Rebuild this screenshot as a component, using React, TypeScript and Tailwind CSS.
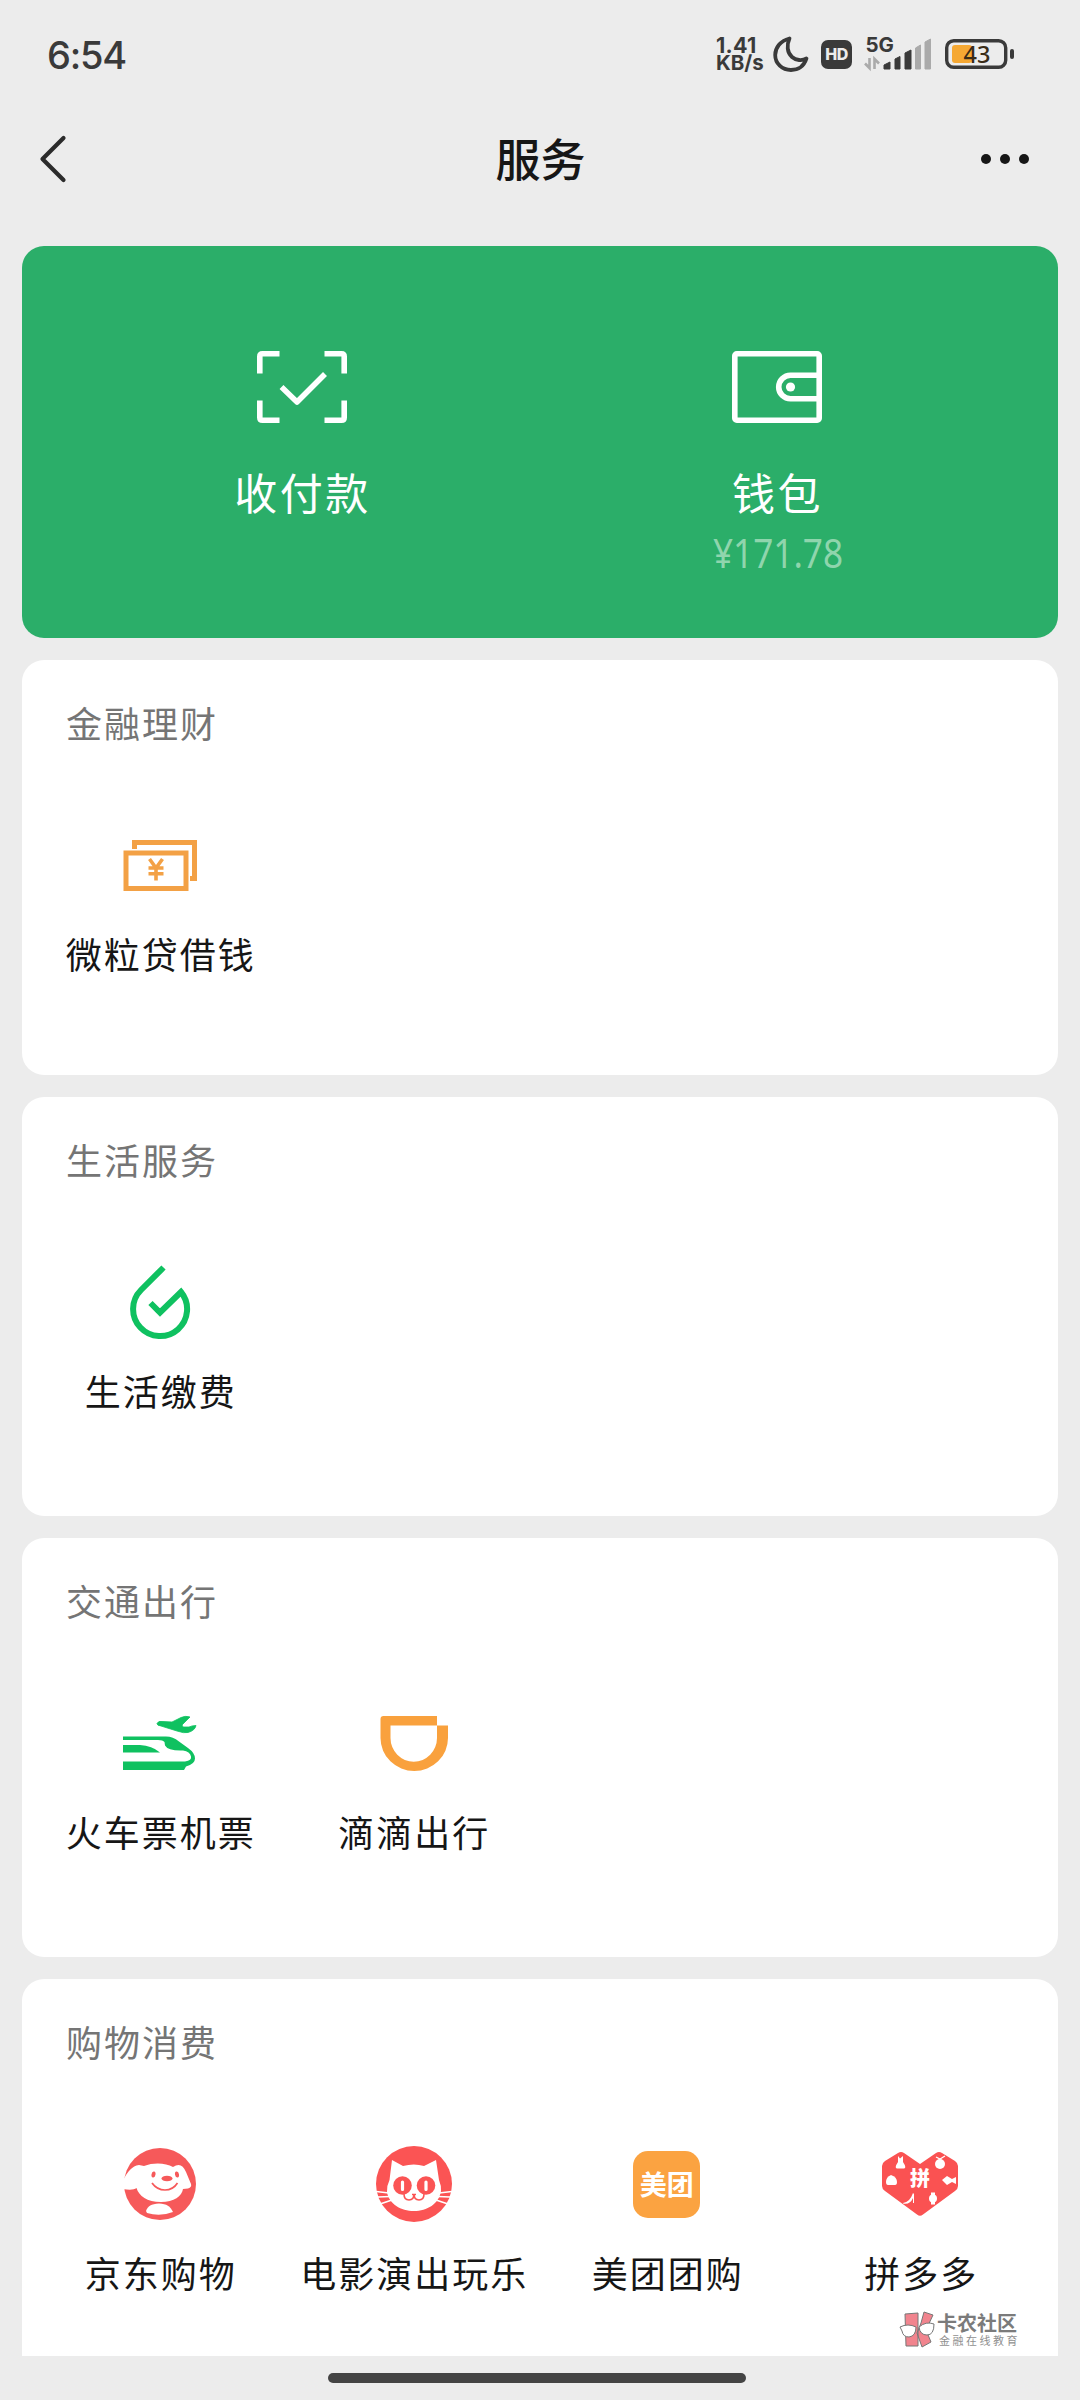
import React from "react";

const Battery = () => (
  <svg width="70" height="30" viewBox="0 0 70 30">
    <rect x="1.7" y="1.7" width="59" height="26.6" rx="7" fill="none" stroke="#3a3a3a" strokeWidth="3.4" />
    <rect x="7" y="6" width="20" height="18" rx="3" fill="#f5a833" />
    <rect x="65" y="10" width="4" height="10" rx="2" fill="#3a3a3a" />
    <text x="32" y="23.5" textAnchor="middle" fontSize="23.5" fontFamily="'Noto Sans', sans-serif" fontWeight="500" fill="#3a2c18">43</text>
  </svg>
);

const StatusBar = () => (
  <header className="flex h-[108px] items-center pl-[47px] pr-[65px] text-[#3a3a3a]">
    <span className="mt-[2px] font-[Inter] text-[38px] font-medium leading-none tracking-[-1.2px]">6:54</span>
    <div className="ml-auto flex items-center">
      <div className="mr-[9px] w-[48px] whitespace-nowrap font-[Inter] font-bold">
        <div className="text-[21.5px] leading-[18px] tracking-[0.3px]">1.41</div>
        <div className="text-[20.5px] leading-[18px]">KB/s</div>
      </div>
      <svg width="36" height="36" viewBox="0 0 36 36" className="mr-[12px]">
        <path d="M16.5 2.500 C7 5 2.200 12 2.200 19 C2.200 27.500 9 34 18 34 C25.500 34 31 30 33.500 22.500 C29 25 23 24.500 19 21 C14 16.500 13.500 9 16.500 2.500Z" fill="none" stroke="#3a3a3a" strokeWidth="3.8" strokeLinejoin="round" />
      </svg>
      <div className="mr-[12px] flex h-[29px] w-[31px] items-center justify-center rounded-[7px] bg-[#3a3a3a] font-[Inter] text-[16px] font-extrabold leading-none tracking-[-0.5px] text-[#ececec]">HD</div>
      <svg width="68" height="36" viewBox="0 0 68 36" className="mr-[13px] overflow-visible">
        <text x="1.5" y="15.5" fontSize="20.500" fontWeight="700" fontFamily="Inter, sans-serif" fill="#3a3a3a">5G</text>
        <g stroke="#aaa" strokeWidth="2.600" fill="none">
          <path d="M1 27.500 L5.500 32 V22" />
          <path d="M10.500 33 V23 L15 27.500" />
        </g>
        <path d="M20 33 V29 L26 26 V33Z M31 33 V23 L36 20.500 V33Z M41 33 V17 L47 14 V33Z" fill="#3a3a3a" stroke="#3a3a3a" strokeLinejoin="round" />
        <path d="M51.500 33 V12 L56.500 9 V33Z M61 33 V6 L66.500 3 V33Z" fill="#aaa" stroke="#aaa" strokeLinejoin="round" />
      </svg>
      <Battery />
    </div>
  </header>
);

const NavBar = () => (
  <nav className="flex h-[102px] items-center justify-between pl-[39px] pr-[51px]">
    <svg width="30" height="48" viewBox="0 0 30 48" fill="none" stroke="#2b2b2b" strokeWidth="4.200" strokeLinecap="round" strokeLinejoin="round">
      <path d="M24.500 3 L3.500 24 L24.500 45" />
    </svg>
    <h1 className="-mt-[4px] ml-[31px] text-[45px] font-medium leading-none text-[#161616]">服务</h1>
    <div className="flex gap-[9px]">
      <i className="size-[10px] rounded-full bg-[#161616]" />
      <i className="size-[10px] rounded-full bg-[#161616]" />
      <i className="size-[10px] rounded-full bg-[#161616]" />
    </div>
  </nav>
);

const ScanIcon = () => (
  <svg width="90" height="72" viewBox="0 0 90 72" fill="none" stroke="white" strokeWidth="5.600">
    <path d="M2.800 22.500 V5.500 Q2.800 2.800 5.500 2.800 H22.500 M67.500 2.800 H84.500 Q87.200 2.800 87.200 5.500 V22.500 M87.200 49.500 V66.500 Q87.200 69.200 84.500 69.200 H67.500 M22.500 69.200 H5.500 Q2.800 69.200 2.800 66.500 V49.500" />
    <path d="M24.500 36 L40 51 L68 23" strokeLinejoin="round" />
  </svg>
);

const WalletIcon = () => (
  <svg width="90" height="72" viewBox="0 0 90 72" fill="none" stroke="white" strokeWidth="5.600">
    <rect x="2.800" y="2.800" width="84.400" height="66.400" rx="2" />
    <path d="M86 24.200 H58.500 A11.800 11.800 0 0 0 58.500 47.800 H86" />
    <circle cx="58.500" cy="36" r="4.600" fill="white" stroke="none" />
  </svg>
);

const LoanIcon = () => (
  <svg width="76" height="76" viewBox="0 0 76 76" fill="none" stroke="#f3a145" strokeWidth="5">
    <path d="M12.500 22 V15.500 H72.500 V51.500 H68" />
    <rect x="4" y="26" width="60" height="35.500" />
    <path d="M27.500 32 L34 41 L40.500 32 M26.500 41 H41.500 M26.500 46.800 H41.500 M34 41 V53.500" strokeWidth="3.600" />
  </svg>
);

const DropIcon = () => (
  <svg width="76" height="76" viewBox="0 0 76 76" fill="none" stroke="#0fc160" strokeWidth="6">
    <path d="M41.500 3.500 L19 26 A27 27 0 1 0 59 28 L38 48.500 L28.500 39" />
  </svg>
);

const TravelIcon = () => (
  <svg width="76" height="76" viewBox="0 0 76 76" fill="#0fc160">
    <path d="M35 18.500 Q36 15.500 41 16.500 L50 17 L59 12.500 Q64 10.500 68 12 L60 20 L61 22 L67 22 Q70 20.500 74 20.500 Q73 25.500 66 27.500 Q62 28.500 55 26 L39 21 Q35 20.500 35 18.500Z" stroke="#0fc160" strokeWidth="0.800" strokeLinejoin="round" />
    <path d="M1 31.500 H44 Q51 31.500 57 36.500 L66 43 Q73 48 73 53.500 Q73 59 64 61.500 L62 65 H1 V56.500 H63 Q70 55.500 69 51.500 Q68 46.500 61 45.500 Q46 46 43 40.500 L42.500 37 Q41 35 36 35 H1Z" />
    <path d="M1 40 H18 Q30 40.500 38 47.500 H1Z" />
  </svg>
);

const DidiIcon = () => (
  <svg width="76" height="76" viewBox="0 0 76 76" fill="#f9a13d" fillRule="evenodd" className="ml-[2px]">
    <path d="M7.500 11 H61 V20.500 H72 V33 A33.750 33 0 0 1 4.500 33 V14 Q4.500 11 7.500 11Z M14.500 20.500 V33 A23.250 23.700 0 0 0 61 33 V20.500Z" />
  </svg>
);

const JdIcon = () => (
  <svg width="76" height="76" viewBox="0 0 76 76">
    <circle cx="38" cy="38" r="36" fill="#f6595a" />
    <path d="M0 36 C6 25 10 20 17 19 L22 20 C32 16 44 17 51 21 C57 17 61 19 64 26 L69 38 Q70 41 66 42.500 L61 43 C60 50 52 56 39 56 C25 56 17 50 14.500 42 C12 44 7 44 1 43Z" fill="white" />
    <path d="M24 65 C26 60 29 58 37 57.500 C45 58 48 60 51 66 Q38 71 25 67Z" fill="white" />
    <ellipse cx="31.500" cy="28.500" rx="2" ry="3" fill="#f6595a" transform="rotate(10 31.500 28.500)" />
    <ellipse cx="55" cy="28.500" rx="2" ry="3" fill="#f6595a" transform="rotate(-10 55 28.500)" />
    <ellipse cx="45" cy="32.500" rx="5.500" ry="2.800" fill="#f6595a" />
    <path d="M30 37 Q35 44 43 44 Q51 44 55.500 37" fill="none" stroke="#f6595a" strokeWidth="1.700" />
  </svg>
);

const CatIcon = () => (
  <svg width="76" height="76" viewBox="0 0 76 76" className="ml-px">
    <circle cx="38" cy="38" r="38" fill="#fb5454" />
    <path d="M13.500 34 L16 14 L27 20 Q38 17 48 20 L60 14 L63 34 Q65.500 40 65 45 C63 58 51 65 38 65 C25 65 13 58 11 46 Q10.500 40 13.500 34Z" fill="white" />
    <circle cx="26.500" cy="39.500" r="9.300" fill="#fb5454" />
    <circle cx="50" cy="39.500" r="9.300" fill="#fb5454" />
    <path d="M26.500 36 V43.500 M50 36 V43.500" stroke="white" strokeWidth="3.200" strokeLinecap="round" />
    <path d="M28 48 Q28 54 33 54 Q38 54 38 48 Q38 54 43 54 Q48 54 48 48 M36 48.500 H40" stroke="#fb5454" strokeWidth="1.600" fill="none" />
    <path d="M0 45.500 L13 47 M2 51 L14 50.500 M4 58 L16 54 M76 45.500 L63 47 M74 51 L62 50.500 M72 58 L60 54" stroke="white" strokeWidth="1.700" />
  </svg>
);

const MeituanIcon = () => (
  <div className="flex size-[67px] items-center justify-center rounded-[15px] bg-[#fba341] pb-[2px] text-[27px] font-bold leading-none text-white">美团</div>
);

const PddIcon = () => (
  <svg width="78" height="76" viewBox="0 0 78 76">
    <path d="M17 7 Q20 5 23 7 L39 18 L55 7 Q58 5 61 7 L74 15 Q77 17 77 20 V40 Q77 43 74 45 L42 68.500 Q39 71 36 68.500 L4 45 Q1 43 1 40 V20 Q1 17 4 15Z" fill="#fa5252" />
    <text x="39" y="40" textAnchor="middle" fontSize="20" fontWeight="900" fill="white" fontFamily="'Noto Sans CJK SC', sans-serif">拼</text>
    <g fill="white">
      <path d="M17 10 L19 12.500 L22 10 L22 16 Q26 22 23 22.500 H16 Q13 22 17 16Z" />
      <circle cx="59" cy="18" r="5" />
      <path d="M55 11 L59 13 L64 10" stroke="white" strokeWidth="1.300" fill="none" />
      <path d="M5 36 Q5 31 10 29 Q16 31 16 36 Q16 39 14 39 H7 Q5 39 5 36Z" />
      <path d="M61 34 L66 30 L71 33 L75 31 V38 L71 36 L66 39Z" />
      <path d="M22 57 Q29 56 32 47 L33 48 V57 H32 V52 Q29 59 22 57.500Z" />
      <circle cx="52" cy="52.500" r="4" />
      <rect x="50" y="46.500" width="4" height="12" />
    </g>
  </svg>
);

type Item = { label: string; icon: React.ReactNode };

const Section = ({ title, items, className }: { title: string; items: Item[]; className: string }) => (
  <section className={`rounded-[22px] bg-white px-[11px] pt-[40px] ${className}`}>
    <h2 className="pl-[33px] text-[36px] leading-[44px] tracking-[2px] text-[#757575]">{title}</h2>
    <div className="mt-[83px] grid grid-cols-4">
      {items.map((item) => (
        <div key={item.label} className="flex flex-col items-center">
          <div className="flex h-[76px] items-center justify-center">{item.icon}</div>
          <div className="mt-[28px] whitespace-nowrap pl-[2px] text-[36px] leading-[44px] tracking-[2px] text-[#161616]">{item.label}</div>
        </div>
      ))}
    </div>
  </section>
);

const Watermark = () => (
  <div className="absolute left-[899px] top-[2311px] flex items-start">
    <svg width="36" height="37" viewBox="0 0 36 37" stroke="#777" strokeWidth="1">
      <path d="M6 3 L19 2 V35 L7 35Z M22 12 L25 1 L34 4 L27 19 L32 31 L23 36 L18 22Z" fill="#f1848e" />
      <path d="M1 16 Q9 12 17 16 Q17 25 10 26 Q4 26 3 20Z M20 16 Q27 10 35 13 Q35 24 28 24 Q21 24 20 16Z" fill="white" />
    </svg>
    <div className="ml-[2px] whitespace-nowrap text-[#7b7b7b]">
      <div className="text-[20px] font-bold leading-[23px]">卡农社区</div>
      <div className="pl-[2px] text-[11px] leading-[12px] tracking-[2.500px] text-[#909090]">金融在线教育</div>
    </div>
  </div>
);

export default function App() {
  return (
    <div className="relative flex h-[2400px] w-[1080px] flex-col overflow-hidden bg-[#ececec] font-['Noto_Sans_CJK_SC',sans-serif]">
      <StatusBar />
      <NavBar />
      <main className="mt-[36px] flex h-[2110px] flex-col gap-[22px] overflow-hidden px-[22px]">
        <section className="grid h-[392px] shrink-0 grid-cols-2 rounded-[22px] bg-[#2bae69] pl-[42px] pr-[44px] pt-[105px] text-white">
          <div className="flex flex-col items-center">
            <ScanIcon />
            <div className="mt-[42px] pl-[2px] text-[43px] leading-[52px] tracking-[2.500px]">收付款</div>
          </div>
          <div className="flex flex-col items-center">
            <WalletIcon />
            <div className="mt-[42px] pl-[2px] text-[43px] leading-[52px] tracking-[2.500px]">钱包</div>
            <div className="ml-[2px] mt-[14px] origin-center scale-x-[0.88] font-['Noto_Sans'] text-[40px] leading-[44px] text-[#8fd5ad]">¥171.78</div>
          </div>
        </section>
        <Section className="h-[415px] shrink-0" title="金融理财" items={[{ label: "微粒贷借钱", icon: <LoanIcon /> }]} />
        <Section className="h-[419px] shrink-0" title="生活服务" items={[{ label: "生活缴费", icon: <DropIcon /> }]} />
        <Section className="h-[419px] shrink-0" title="交通出行" items={[{ label: "火车票机票", icon: <TravelIcon /> }, { label: "滴滴出行", icon: <DidiIcon /> }]} />
        <Section
          className="h-[419px] shrink-0"
          title="购物消费"
          items={[
            { label: "京东购物", icon: <JdIcon /> },
            { label: "电影演出玩乐", icon: <CatIcon /> },
            { label: "美团团购", icon: <MeituanIcon /> },
            { label: "拼多多", icon: <PddIcon /> },
          ]}
        />
      </main>
      <div className="ml-[328px] mt-[17px] h-[10px] w-[418px] rounded-full bg-[#444]" />
      <Watermark />
    </div>
  );
}
